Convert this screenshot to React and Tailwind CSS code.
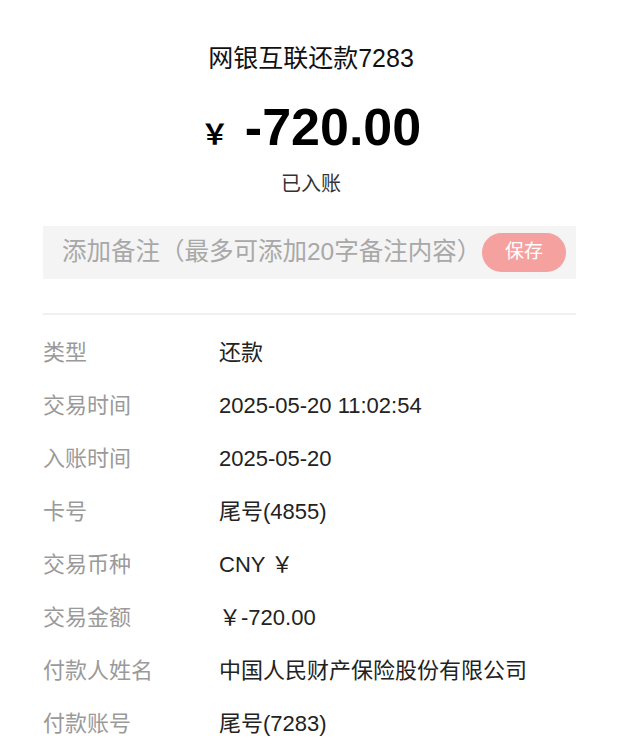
import React from "react";

const rows = [
  ["类型", "还款"],
  ["交易时间", "2025-05-20 11:02:54"],
  ["入账时间", "2025-05-20"],
  ["卡号", "尾号(4855)"],
  ["交易币种", "CNY ￥"],
  ["交易金额", "￥-720.00"],
  ["付款人姓名", "中国人民财产保险股份有限公司"],
  ["付款账号", "尾号(7283)"],
];

const App = () => {
  return (
    <div
      className="w-[622px] h-[756px] overflow-hidden bg-white"
      style={{ fontFamily: '"Liberation Sans", "Noto Sans CJK SC", sans-serif' }}
    >
      {/* header */}
      <div className="flex flex-col items-center pt-[41px]">
        <h1 className="text-[25px] leading-[34px] text-[#111]">网银互联还款7283</h1>
        <div className="flex items-baseline mt-[23px] text-black">
          <span className="text-[28px] font-bold mr-[16px]">￥</span>
          <span className="text-[52px] leading-[58px] font-bold">-720.00</span>
        </div>
        <div className="mt-[14px] text-[20px] leading-[26px] text-[#333]">已入账</div>
      </div>

      {/* note */}
      <div className="ml-[43px] w-[533px] mt-[29px] h-[53px] bg-[#f4f4f4] flex items-center justify-between pl-[19px] pr-[10px]">
        <span className="text-[24.5px] text-[#a8a8a8] whitespace-nowrap">添加备注（最多可添加20字备注内容）</span>
        <button className="w-[84px] h-[39px] rounded-full bg-[#f4a19f] text-white text-[19px] shrink-0">
          保存
        </button>
      </div>

      <div className="ml-[43px] w-[533px] mt-[34px] h-[2px] bg-[#f0f0f0]" />

      {/* details */}
      <div className="ml-[43px] mt-[11px]">
        {rows.map(([label, value]) => (
          <div key={label} className="flex items-center h-[53px] text-[22px]">
            <span className="w-[176px] text-[#9a9a9a]">{label}</span>
            <span className="text-[#222]">{value}</span>
          </div>
        ))}
      </div>
    </div>
  );
};

export default App;
